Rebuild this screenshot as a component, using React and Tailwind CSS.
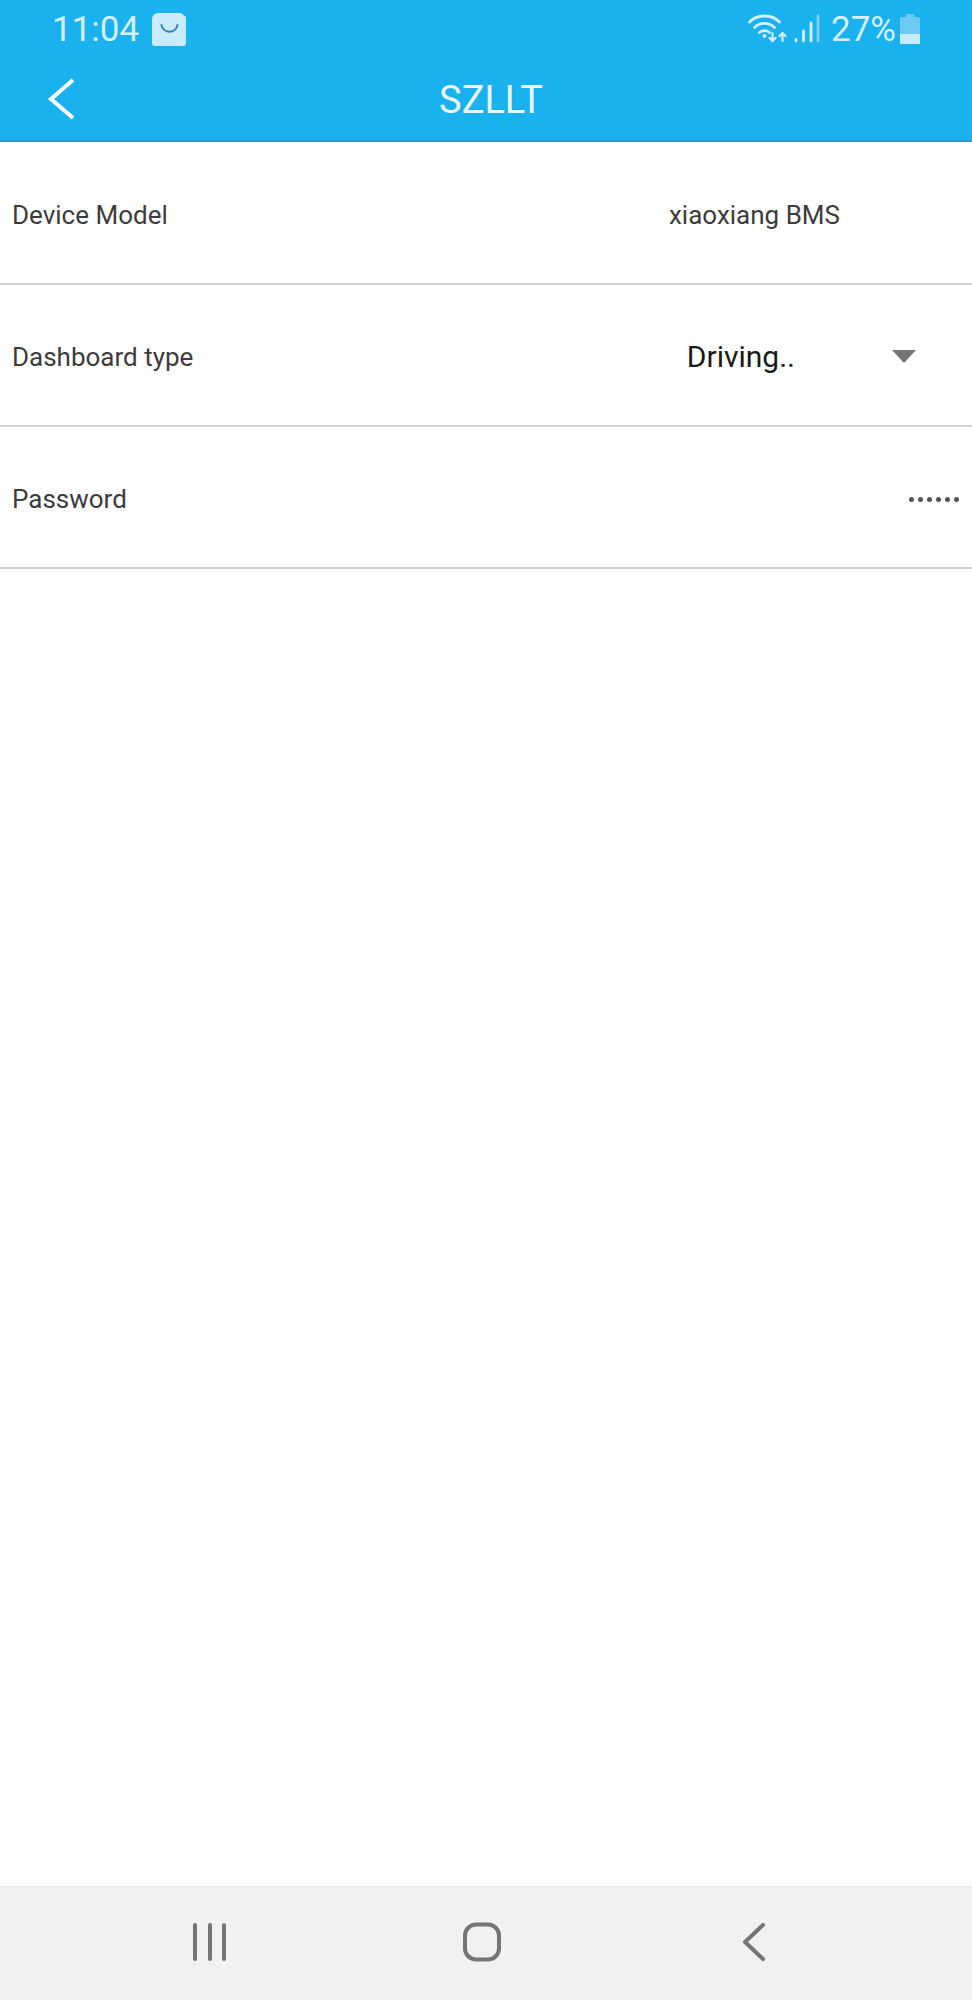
import React from 'react';

const Row = ({ label, children }) => (
  <div className="h-[142px] flex items-center justify-between border-b-2 border-[#d2d2d2] pt-[5px]">
    <span className="pl-3 text-[26px] text-[#3c3c3c]">{label}</span>
    {children}
  </div>
);

const WifiIcon = () => (
  <svg width="40" height="32" viewBox="0 0 40 32" fill="none" stroke="#d6effb" strokeWidth="2.8" strokeLinecap="round">
    <path d="M1.5 9C9 1 24 1 31.5 9" />
    <path d="M6.5 14.5C12 9 21 9 26.5 14.5" />
    <path d="M11.5 19.5C14 17 19 17 21.5 19.5" />
    <circle cx="16.5" cy="23" r="2" fill="#d6effb" stroke="none" />
    <path d="M24.5 20V28M21.5 25L24.5 28L27.5 25" strokeWidth="2.2" />
    <path d="M34.5 28V20M31.5 23L34.5 20L37.5 23" strokeWidth="2.2" />
  </svg>
);

const SignalIcon = () => (
  <svg width="26" height="30" viewBox="0 0 26 30" fill="none" strokeWidth="2.8" strokeLinecap="round">
    <path d="M2 25.5V27" stroke="#d6effb" />
    <path d="M9.5 17V27" stroke="#d6effb" />
    <path d="M17 9V27" stroke="#d6effb" />
    <path d="M24 2V27" stroke="#7fd0f4" />
  </svg>
);

const BatteryIcon = () => (
  <svg width="20" height="30" viewBox="0 0 20 30" stroke="none">
    <path d="M6 0H14V3H18.5A1.5 1.5 0 0 1 20 4.5V28.5A1.5 1.5 0 0 1 18.5 30H1.5A1.5 1.5 0 0 1 0 28.5V4.5A1.5 1.5 0 0 1 1.5 3H6Z" fill="#6dcaf3" />
    <path d="M0 20H20V28.5A1.5 1.5 0 0 1 18.5 30H1.5A1.5 1.5 0 0 1 0 28.5Z" fill="#c9ebfb" />
  </svg>
);

const App = () => {
  return (
    <div className="w-[972px] h-[2000px] flex flex-col bg-white font-['Roboto',sans-serif]">
      {/* header */}
      <div className="h-[142px] shrink-0 flex flex-col bg-[#19b1ee] border-b-2 border-[#3a94c8]">
        <div className="h-[58px] flex items-center justify-between pl-[52px] pr-[52px]">
          <div className="flex items-center gap-[13px]">
            <span className="text-[35px] leading-none text-[#d6effb]">11:04</span>
            <svg width="35" height="34" viewBox="0 0 35 34">
              <path d="M6 1H29L34 5V31A3 3 0 0 1 31 34H3A3 3 0 0 1 0 31V7A6 6 0 0 1 6 1Z" fill="#c9ebfb" />
              <path d="M9.5 13C11 22 24 22 25.5 13" fill="none" stroke="#2f86b8" strokeWidth="2" strokeLinecap="round" />
            </svg>
          </div>
          <div className="flex items-center">
            <WifiIcon />
            <span className="ml-[6px]"><SignalIcon /></span>
            <span className="ml-[11px] text-[35px] leading-none text-[#d6effb]">27%</span>
            <span className="ml-[4px]"><BatteryIcon /></span>
          </div>
        </div>
        <div className="relative flex-1 flex items-center justify-center">
          <svg className="absolute left-[46px] top-[20px]" width="32" height="42" viewBox="0 0 32 42" fill="none" stroke="#ffffff" strokeWidth="4">
            <path d="M27 2L5 21L27 40" />
          </svg>
          <span className="pl-[10px] pt-[3px] text-[38px] text-[#eaf8fe]">SZLLT</span>
        </div>
      </div>

      {/* rows */}
      <div className="pt-[1px]">
        <Row label="Device Model">
          <span className="pr-[132px] text-[26px] text-[#3c3c3c]">xiaoxiang BMS</span>
        </Row>
        <Row label="Dashboard type">
          <div className="flex items-center">
            <span className="pl-[1px] pb-[2px] text-[30px] text-[#1a1a1a]">Driving..</span>
            <svg className="ml-[97px] mr-[56px] -mt-[3px]" width="24" height="13" viewBox="0 0 24 13">
              <path d="M0 0H24L12 13Z" fill="#757575" />
            </svg>
          </div>
        </Row>
        <Row label="Password">
          <div className="flex gap-[4px] pr-[13px]">
            {[0, 1, 2, 3, 4, 5].map(i => (
              <span key={i} className="w-[5px] h-[5px] rounded-full bg-[#555555]" />
            ))}
          </div>
        </Row>
      </div>

      <div className="flex-1" />

      {/* android nav bar */}
      <div className="h-[114px] shrink-0 relative flex items-center bg-[#f1f1f1] border-t border-[#e8e8e8]">
        <svg className="absolute left-[192px] top-[36px]" width="36" height="38" viewBox="0 0 36 38" fill="none" stroke="#757575" strokeWidth="4" strokeLinecap="round">
          <path d="M3 2V36M18 2V36M32 2V36" />
        </svg>
        <svg className="absolute left-[462px] top-[35px]" width="40" height="40" viewBox="0 0 40 40" fill="none" stroke="#757575" strokeWidth="4">
          <rect x="3" y="2.5" width="34" height="35" rx="11" />
        </svg>
        <svg className="absolute left-[741px] top-[36px]" width="26" height="38" viewBox="0 0 26 38" fill="none" stroke="#757575" strokeWidth="4" strokeLinecap="round" strokeLinejoin="round">
          <path d="M22 2L4 19L22 36" />
        </svg>
      </div>
    </div>
  );
};

export default App;
